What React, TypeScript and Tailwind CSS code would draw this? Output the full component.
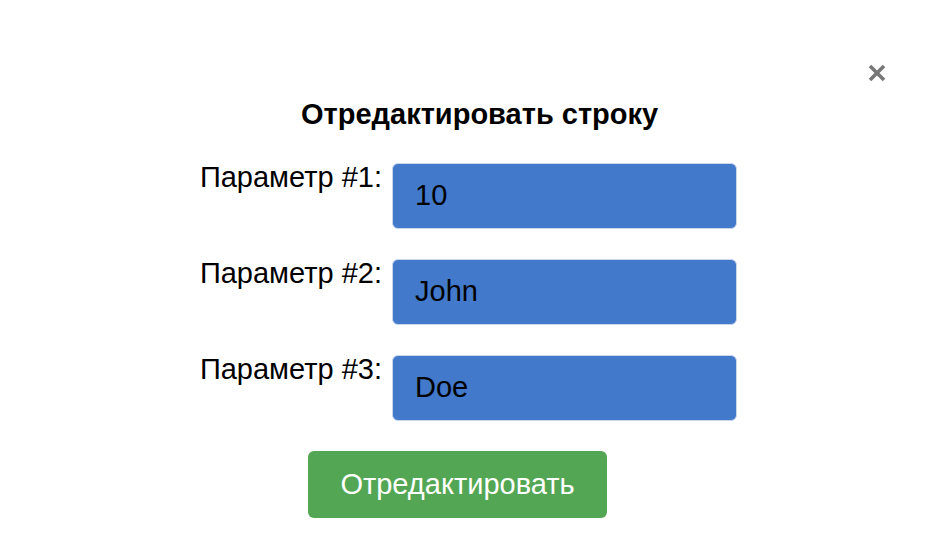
import React from "react";

const rows = [
  { label: "Параметр #1:", value: "10" },
  { label: "Параметр #2:", value: "John" },
  { label: "Параметр #3:", value: "Doe" },
];

export default function App() {
  return (
    <div
      className="relative w-[946px] h-[542px] bg-white text-black"
      style={{ fontFamily: '"Liberation Sans", Arial, sans-serif' }}
    >
      <button className="absolute left-[866px] top-[62px] w-[22px] h-[22px] flex items-center justify-center">
        <svg width="20" height="20" viewBox="0 0 20 20">
          <path d="M3 3 L17 17 M17 3 L3 17" stroke="#777777" strokeWidth="3.6" strokeLinecap="butt" />
        </svg>
      </button>
      <div className="flex flex-col pt-[97px]">
        <h2 className="pl-[301px] text-[29px] leading-[34px] font-bold">Отредактировать строку</h2>
        <div className="flex flex-col gap-[30px] mt-[32px] pl-[190px]">
          {rows.map((r) => (
            <div key={r.label} className="flex items-start gap-[10px]">
              <label className="w-[192px] text-right text-[29px] leading-[34px] -mt-[3px]">{r.label}</label>
              <div className="w-[345px] h-[66px] rounded-[6px] border border-[#c9d6ea] bg-[#4279cb] flex items-center pl-[22px] text-[29px]">
                {r.value}
              </div>
            </div>
          ))}
        </div>
        <button className="ml-[308px] mt-[30px] w-[299px] h-[67px] rounded-[6px] bg-[#53a653] text-white text-[29px]">
          Отредактировать
        </button>
      </div>
    </div>
  );
}
